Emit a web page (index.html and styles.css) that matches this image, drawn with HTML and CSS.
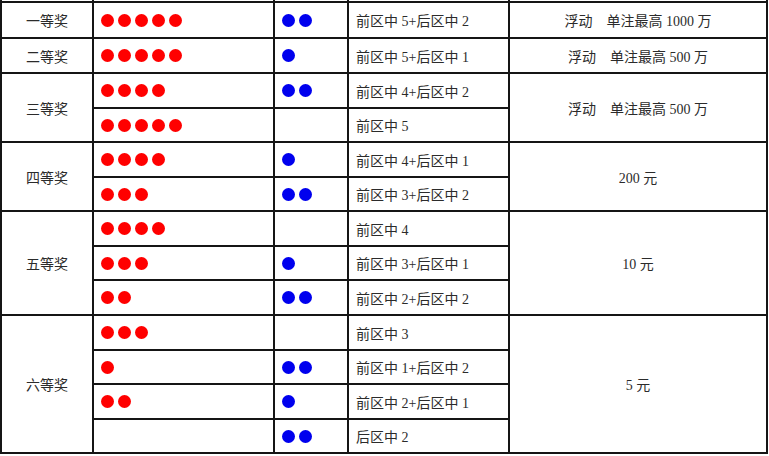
FILE: index.html
```html
<!DOCTYPE html>
<html lang="zh-CN">
<head>
<meta charset="utf-8">
<title>大乐透奖级</title>
<link rel="stylesheet" href="styles.css">
</head>
<body>
<div class="grid">
  <div class="cap"></div><div class="cap"></div><div class="cap"></div><div class="cap"></div><div class="cap"></div>

  <div class="cell center r1">一等奖</div>
  <div class="cell balls"><i class="r"></i><i class="r"></i><i class="r"></i><i class="r"></i><i class="r"></i></div>
  <div class="cell balls"><i class="b"></i><i class="b"></i></div>
  <div class="cell text">前区中 5+后区中 2</div>
  <div class="cell center">浮动　单注最高 1000 万</div>

  <div class="cell center">二等奖</div>
  <div class="cell balls"><i class="r"></i><i class="r"></i><i class="r"></i><i class="r"></i><i class="r"></i></div>
  <div class="cell balls"><i class="b"></i></div>
  <div class="cell text">前区中 5+后区中 1</div>
  <div class="cell center">浮动　单注最高 500 万</div>

  <div class="cell center span2">三等奖</div>
  <div class="cell balls"><i class="r"></i><i class="r"></i><i class="r"></i><i class="r"></i></div>
  <div class="cell balls"><i class="b"></i><i class="b"></i></div>
  <div class="cell text">前区中 4+后区中 2</div>
  <div class="cell center span2">浮动　单注最高 500 万</div>
  <div class="cell balls"><i class="r"></i><i class="r"></i><i class="r"></i><i class="r"></i><i class="r"></i></div>
  <div class="cell balls"></div>
  <div class="cell text">前区中 5</div>

  <div class="cell center span2">四等奖</div>
  <div class="cell balls"><i class="r"></i><i class="r"></i><i class="r"></i><i class="r"></i></div>
  <div class="cell balls"><i class="b"></i></div>
  <div class="cell text">前区中 4+后区中 1</div>
  <div class="cell center span2">200 元</div>
  <div class="cell balls"><i class="r"></i><i class="r"></i><i class="r"></i></div>
  <div class="cell balls"><i class="b"></i><i class="b"></i></div>
  <div class="cell text">前区中 3+后区中 2</div>

  <div class="cell center span3">五等奖</div>
  <div class="cell balls"><i class="r"></i><i class="r"></i><i class="r"></i><i class="r"></i></div>
  <div class="cell balls"></div>
  <div class="cell text">前区中 4</div>
  <div class="cell center span3">10 元</div>
  <div class="cell balls"><i class="r"></i><i class="r"></i><i class="r"></i></div>
  <div class="cell balls"><i class="b"></i></div>
  <div class="cell text">前区中 3+后区中 1</div>
  <div class="cell balls"><i class="r"></i><i class="r"></i></div>
  <div class="cell balls"><i class="b"></i><i class="b"></i></div>
  <div class="cell text">前区中 2+后区中 2</div>

  <div class="cell center span4">六等奖</div>
  <div class="cell balls"><i class="r"></i><i class="r"></i><i class="r"></i></div>
  <div class="cell balls"></div>
  <div class="cell text">前区中 3</div>
  <div class="cell center span4">5 元</div>
  <div class="cell balls"><i class="r"></i></div>
  <div class="cell balls"><i class="b"></i><i class="b"></i></div>
  <div class="cell text">前区中 1+后区中 2</div>
  <div class="cell balls"><i class="r"></i><i class="r"></i></div>
  <div class="cell balls"><i class="b"></i></div>
  <div class="cell text">前区中 2+后区中 1</div>
  <div class="cell balls"></div>
  <div class="cell balls"><i class="b"></i><i class="b"></i></div>
  <div class="cell text">后区中 2</div>
</div>
</body>
</html>
```

FILE: styles.css
```css
html, body {
  margin: 0;
  padding: 0;
  background: #fff;
}

body {
  font-family: "Liberation Serif", "Noto Sans CJK SC", serif;
  font-size: 14px;
  color: #2b2b2b;
}

.grid {
  width: 764px;
  display: grid;
  grid-template-columns: 90px 179px 72px 159px 256px;
  grid-template-rows: 1px 34px 33px 33px 32px 33px 32px 33px 32px 33px 33px 32px 33px 32px;
  gap: 2px;
  padding: 0 2px 2px 2px;
  background: #151515;
}

.cap {
  background: #fff;
}

.cell {
  background: #fff;
  display: flex;
  align-items: center;
  min-width: 0;
}

.center {
  justify-content: center;
  text-align: center;
}

.text {
  padding-left: 7px;
}

.balls {
  padding-left: 7px;
  gap: 4px;
}

.span2 { grid-row: span 2; }
.span3 { grid-row: span 3; }
.span4 { grid-row: span 4; }

.balls i {
  display: block;
  width: 13px;
  height: 13px;
  border-radius: 50%;
}

.balls i.r { background: #ff0000; }
.balls i.b { background: #0000ee; }
```
